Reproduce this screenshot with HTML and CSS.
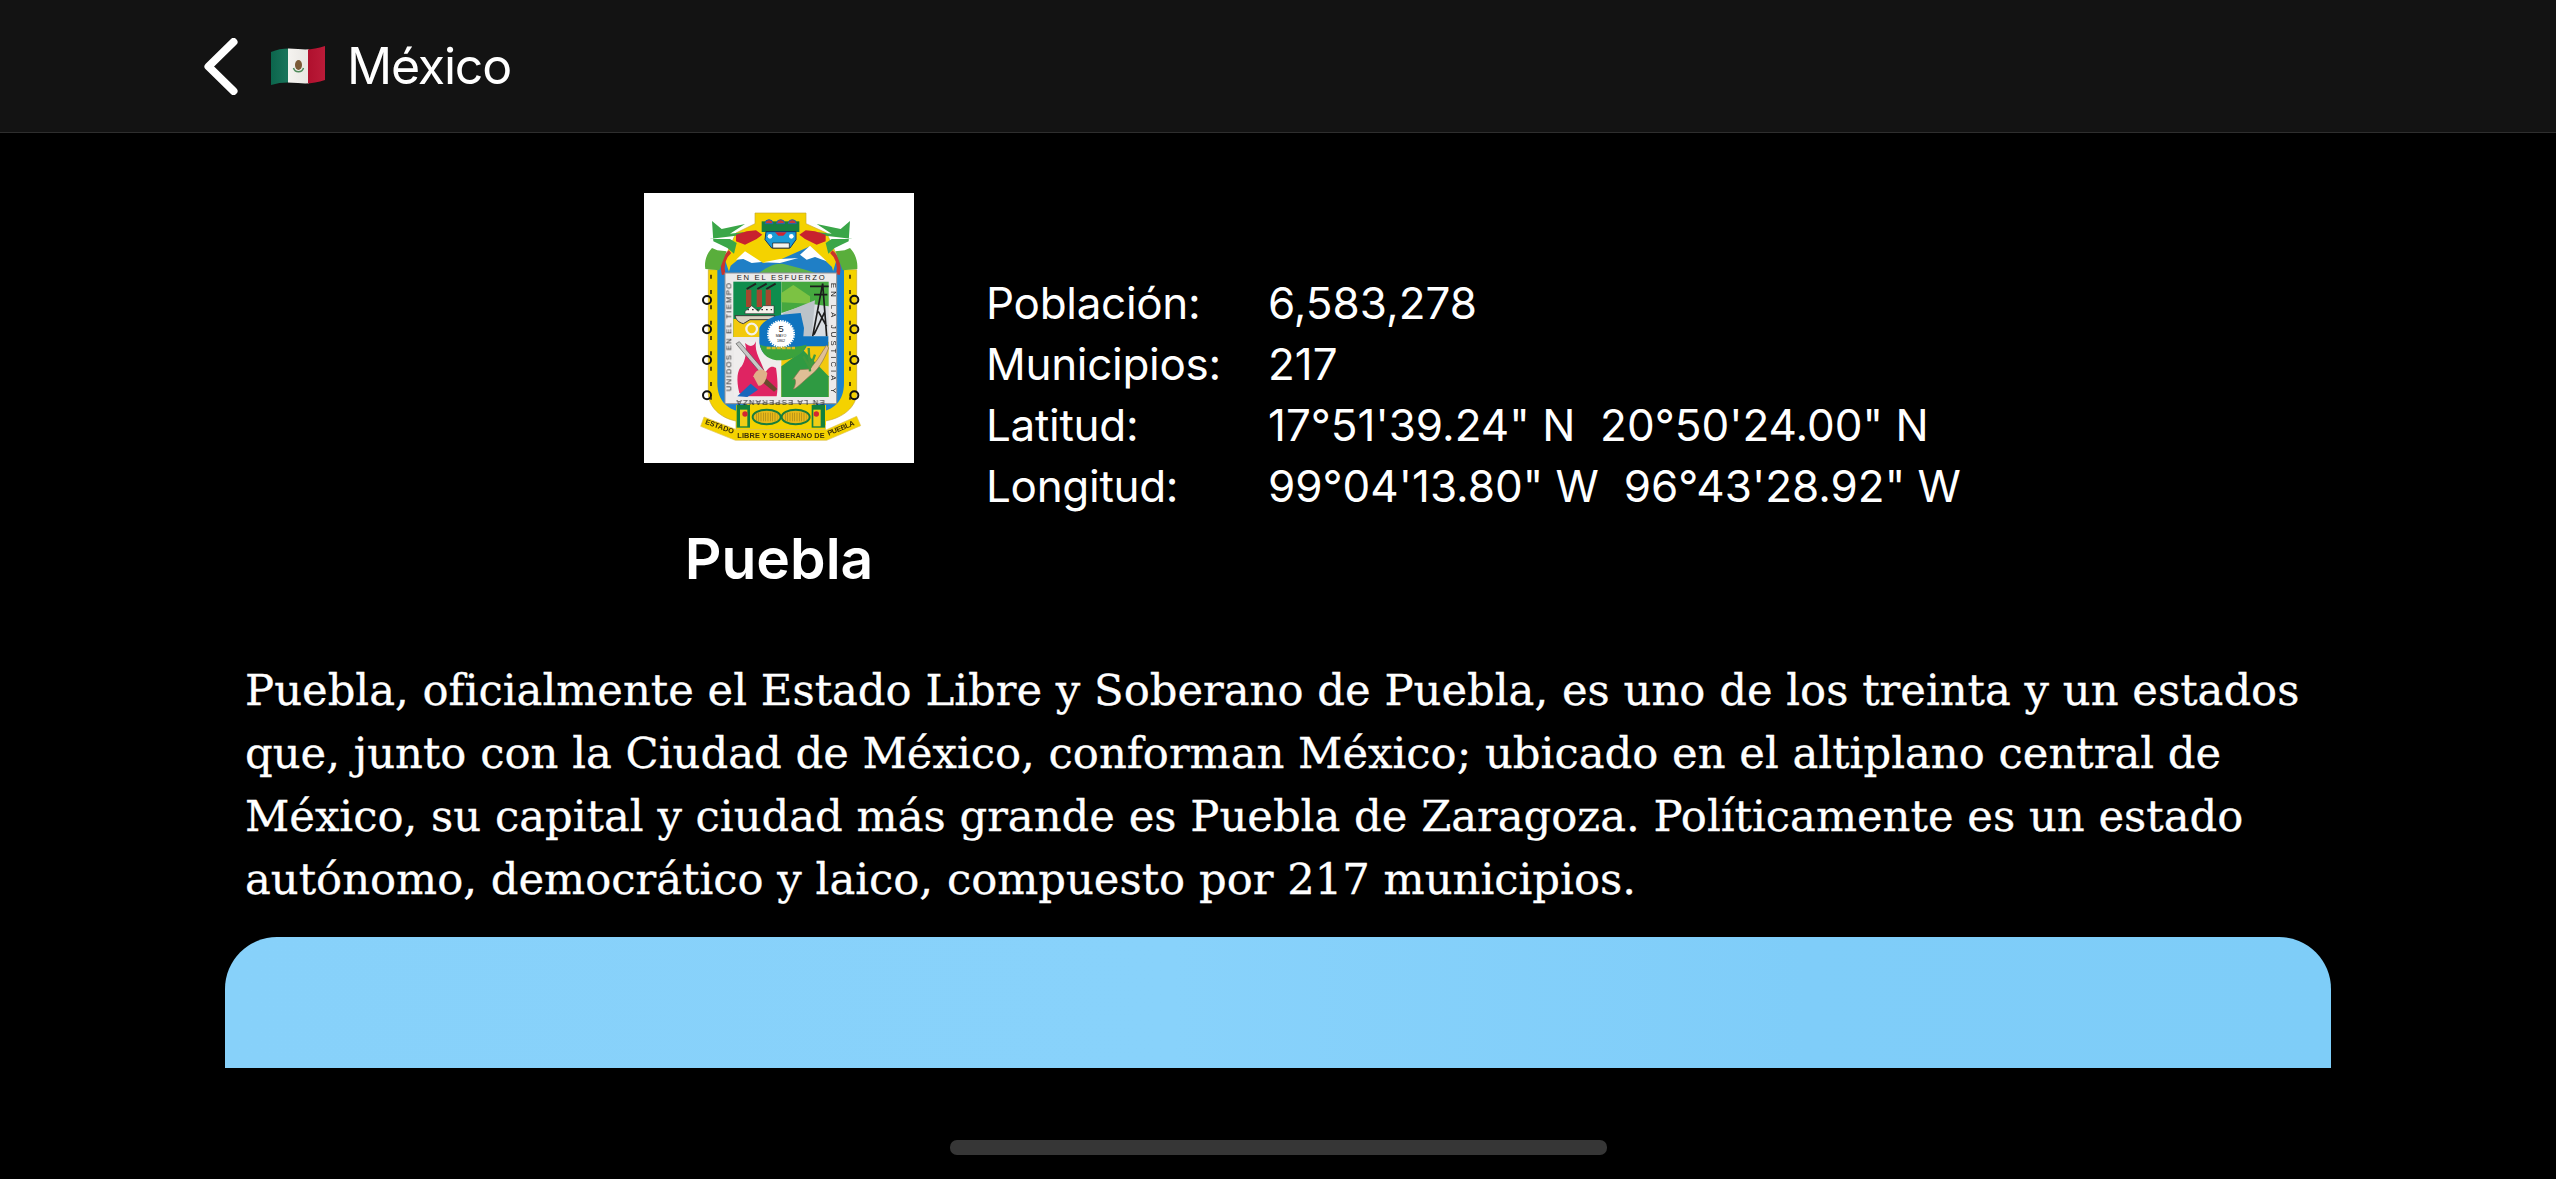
FILE: index.html
```html
<!DOCTYPE html>
<html lang="es">
<head>
<meta charset="utf-8">
<title>Puebla</title>
<link rel="stylesheet" href="styles.css">
</head>
<body>
<header class="nav">
  <svg class="back" viewBox="0 0 34 57" aria-hidden="true"><path d="M29.5 4 L4.5 28.5 L29.5 53" /></svg>
  <svg class="flag" viewBox="0 0 56 42" aria-hidden="true">
    <defs>
      <clipPath id="wave"><path d="M1 7 C10 3 18 3 28 4 C38 5 46 4 55 1 L55 35 C46 38 38 39 28 38 C18 37 10 37 1 40 Z"/></clipPath>
      <linearGradient id="shade" x1="0" x2="1" y1="0" y2="0">
        <stop offset="0" stop-color="#000" stop-opacity=".06"/><stop offset=".3" stop-color="#fff" stop-opacity=".06"/><stop offset=".65" stop-color="#000" stop-opacity=".05"/><stop offset="1" stop-color="#fff" stop-opacity=".05"/>
      </linearGradient>
    </defs>
    <g clip-path="url(#wave)">
      <rect width="18" height="42" x="0" fill="#0b6b50"/>
      <rect width="21" height="42" x="18" fill="#f6f4f0"/>
      <rect width="18" height="42" x="38" fill="#b8102f"/>
      <rect width="56" height="42" fill="url(#shade)"/>
    </g>
    <ellipse cx="28.5" cy="20" rx="3.5" ry="5" fill="#7b5a36"/>
    <path d="M23.5 23 C25 28 32 28 33.5 23" fill="none" stroke="#4f8a5a" stroke-width="1.5"/>
  </svg>
  <span class="nav-title">México</span>
</header>

<main class="page">
  <section class="hero">
    <div class="identity">
      <div class="emblem-box">
        <svg class="emblem" viewBox="42 40 810 810" role="img" aria-label="Escudo de Puebla">
          <rect x="42" y="40" width="810" height="810" fill="#fff"/>
          <!-- gold shield -->
          <path d="M375 100 H528 V132 L590 160 L640 270 L680 270 V640 C680 680 640 715 586 724 L586 750 H318 V724 C270 715 235 680 235 640 V270 L268 270 L318 160 L375 132 Z" fill="#f4d200" stroke="#c9a92e" stroke-width="2"/>
          <!-- blue band -->
          <path d="M262 270 C262 250 268 235 280 225 L300 285 V640 C320 665 340 672 360 678 L345 697 C295 695 262 665 262 610 Z" fill="#1b82cf"/>
          <path d="M642 270 C642 250 636 235 624 225 L606 285 V640 C586 665 566 672 545 678 L560 697 C610 695 642 665 642 610 Z" fill="#1b82cf"/>
          <path d="M281 285 C274 255 282 232 300 216 M624 285 C630 255 622 232 604 216" fill="none" stroke="#c8332d" stroke-width="11"/>
          <!-- mountains -->
          <path d="M295 282 L302 258 L345 222 L400 250 L450 240 L540 200 L606 262 L612 285 Z" fill="#1f7fc6"/>
          <path d="M318 240 L345 215 L395 247 L365 250 L340 238 Z M510 225 L540 198 L590 245 L555 232 L530 240 Z M400 248 L450 238 L505 235 L450 250 Z" fill="#fff"/>
          <path d="M380 285 C410 262 440 245 470 255 C510 265 545 275 570 285 Z" fill="#5db24a"/>
          <!-- frame -->
          <rect x="285" y="280" width="335" height="392" fill="#eceaea" stroke="#8f9094" stroke-width="3"/>
          <!-- quadrants -->
          <rect x="310" y="306" width="144" height="166" fill="#0f8d4d"/>
          <rect x="310" y="418" width="144" height="54" fill="#f2c90d"/>
          <rect x="454" y="306" width="142" height="166" fill="#d8dde2"/>
          <path d="M454 306 H596 V380 L540 372 L454 400 Z" fill="#45a83f"/>
          <path d="M454 340 L490 316 L540 350 L540 372 L454 368 Z" fill="#7cc243"/>
          <path d="M460 400 L555 362 L545 470 L454 472 Z" fill="#bcc3c9"/>
          <rect x="312" y="486" width="142" height="166" fill="#efeded"/>
          <path d="M454 486 H596 V652 H454 Z" fill="#f2c90d"/>
          <path d="M454 560 L520 512 L596 590 L596 652 L454 652 Z" fill="#2f9a42"/>
          <!-- factory -->
          <g fill="#a4472e">
            <rect x="348" y="330" width="16" height="52"/><rect x="380" y="330" width="16" height="52"/><rect x="407" y="330" width="16" height="52"/>
          </g>
          <path d="M350 328 L378 312 M382 328 L410 312 M409 328 L437 312" stroke="#222" stroke-width="6" fill="none"/>
          <path d="M345 395 L365 378 L385 395 L400 378 L432 378 V402 H345 Z" fill="#f5f2ec" stroke="#333" stroke-width="2"/>
          <path d="M352 390 H426" stroke="#333" stroke-width="4" stroke-dasharray="5 9"/>
          <path d="M315 408 H435 L425 420 H360 L340 432 C325 428 318 420 315 408 Z" fill="#d8d2c2" stroke="#3a3a3a" stroke-width="3"/>
          <circle cx="365" cy="448" r="16" fill="none" stroke="#f4f2ea" stroke-width="7"/>
          <!-- pylon -->
          <path d="M578 312 L548 470 M578 312 L590 470 M540 320 H596 M552 345 H592 M565 395 L590 440 M585 395 L552 465" stroke="#1c1c1c" stroke-width="5" fill="none"/>
          <!-- central shield -->
          <path d="M388 445 C400 420 430 410 455 405 L512 400 L522 445 L520 470 H595 V500 H530 C515 530 480 540 450 540 C420 540 392 525 388 490 Z" fill="#0f74bf"/>
          <path d="M390 495 C420 506 490 506 530 495 C520 528 480 542 450 542 C420 542 396 528 390 495 Z" fill="#3ba23c"/>
          <circle cx="453" cy="463" r="38" fill="#fff" stroke="#fff" stroke-dasharray="4 3" stroke-width="8"/>
          <text class="emblem-5" x="453" y="458" text-anchor="middle">5</text>
          <text class="emblem-may" x="453" y="473" text-anchor="middle">MAYO</text>
          <text class="emblem-may" x="453" y="487" text-anchor="middle">1862</text>
          <path d="M410 505 H495" stroke="#d8b928" stroke-width="8" stroke-dasharray="12 3"/>
          <!-- flames and rifle -->
          <path d="M328 640 C318 600 322 570 335 560 C345 545 352 515 345 490 C362 505 372 500 378 485 C372 520 395 545 405 580 C420 555 430 560 438 565 C442 590 445 625 440 650 H345 Z" fill="#df2462"/>
          <path d="M318 492 L392 580 L400 570 L328 486 Z" fill="#c6c8c6" stroke="#555" stroke-width="2"/>
          <path d="M385 575 L442 628 L432 636 L375 590 Z" fill="#6b4a2d"/>
          <path d="M370 590 C380 565 400 565 412 580 C410 600 400 620 385 618 Z" fill="#e0b088"/>
          <path d="M322 650 L362 612 L384 630 L352 652 Z" fill="#1a66bb"/>
          <!-- hand -->
          <path d="M596 505 C580 545 565 570 540 588 C515 610 495 630 490 628 C500 612 498 590 488 600 L510 570 L540 568 L562 540 L590 496 Z" fill="#dfbf96" stroke="#8a7350" stroke-width="2"/>
          <path d="M536 505 L540 575 M520 530 L540 565 M555 525 L540 565" stroke="#3d9a3f" stroke-width="7" fill="none"/>
          <!-- inscriptions -->
          <text class="emblem-motto" x="452" y="300" text-anchor="middle" textLength="264">EN EL ESFUERZO</text>
          <text class="emblem-motto" x="452" y="300" transform="rotate(180 452 480.5)" text-anchor="middle" textLength="264">EN LA ESPERANZA</text>
          <text class="emblem-motto" transform="translate(304 635) rotate(-90)" textLength="325">UNIDOS EN EL TIEMPO</text>
          <text class="emblem-motto" transform="translate(602 310) rotate(90)" textLength="330">EN LA JUSTICIA Y</text>
          <!-- dragons -->
          <path d="M246 124 L275 148 L345 133 L300 162 L345 157 L318 168 L238 178 L300 178 L320 190 L312 222 L292 205 L250 185 Z" fill="#3aa648"/>
          <path d="M660 124 L632 148 L560 133 L605 162 L560 157 L587 168 L668 178 L605 178 L587 190 L595 222 L614 205 L656 185 Z" fill="#3aa648"/>
          <path d="M246 205 L262 212 L290 215 L268 272 L226 268 C222 245 230 222 246 205 Z" fill="#59ae3b"/>
          <path d="M660 205 L644 212 L616 215 L638 272 L682 268 C684 245 676 222 660 205 Z" fill="#59ae3b"/>
          <path d="M318 165 L350 155 L378 152 L397 165 L380 178 L345 195 L318 185 Z M587 165 L555 155 L527 152 L508 165 L525 178 L560 195 L587 185 Z" fill="#c8222e"/>
          <!-- top mask -->
          <rect x="395" y="125" width="113" height="32" fill="#17803f"/>
          <path d="M405 132 a12 12 0 0 1 24 0 Z M440 132 a12 12 0 0 1 24 0 Z M475 132 a12 12 0 0 1 24 0 Z" fill="#c93a36" stroke="#1d67b4" stroke-width="3"/>
          <path d="M408 156 H498 V180 L480 205 H425 L405 180 Z" fill="#1b9bd7" stroke="#12366b" stroke-width="3"/>
          <path d="M428 190 H478 V205 H428 Z" fill="#f3f3ee" stroke="#111" stroke-width="2"/>
          <path d="M435 158 H470 L460 168 H445 Z" fill="#cf2531"/>
          <circle cx="420" cy="170" r="7" fill="#fff"/><circle cx="484" cy="170" r="7" fill="#fff"/>
          <!-- rings -->
          <g fill="none" stroke="#111" stroke-width="6">
            <circle cx="231" cy="361" r="12"/><circle cx="231" cy="449" r="12"/><circle cx="231" cy="541" r="12"/><circle cx="231" cy="647" r="12"/>
            <circle cx="673" cy="360" r="12"/><circle cx="673" cy="449" r="12"/><circle cx="673" cy="541" r="12"/><circle cx="673" cy="647" r="12"/>
          </g>
          <g fill="none" stroke="#3a2c10" stroke-width="5" stroke-dasharray="12 34">
            <path d="M243 285 V660"/><path d="M660 285 V660"/>
          </g>
          <!-- corn -->
          <rect x="318" y="676" width="270" height="60" fill="#f4d200"/>
          <rect x="320" y="676" width="40" height="68" fill="#12813d"/>
          <rect x="545" y="676" width="40" height="68" fill="#12813d"/>
          <rect x="330" y="690" width="22" height="50" fill="#f0cd15"/>
          <rect x="550" y="690" width="22" height="50" fill="#f0cd15"/>
          <circle cx="345" cy="703" r="8" fill="#d52632"/><circle cx="559" cy="703" r="8" fill="#d52632"/>
          <ellipse cx="410" cy="712" rx="42" ry="22" fill="#e9b918" stroke="#177d3d" stroke-width="6"/>
          <ellipse cx="497" cy="712" rx="42" ry="22" fill="#e9b918" stroke="#177d3d" stroke-width="6"/>
          <path d="M378 712 H442 M465 712 H529" stroke="#a5861a" stroke-width="26" stroke-dasharray="2 5" fill="none"/>
          <!-- ribbon -->
          <path d="M222 712 L320 750 H590 L680 710 L692 738 L590 782 H316 L212 740 Z" fill="#f4d200" stroke="#e1c65a" stroke-width="2"/>
          <text class="emblem-ribbon" transform="translate(224 732) rotate(20)" textLength="90">ESTADO</text>
          <text class="emblem-ribbon" x="322" y="776" textLength="262">LIBRE Y SOBERANO DE</text>
          <text class="emblem-ribbon" transform="translate(596 768) rotate(-22)" textLength="85">PUEBLA</text>
        </svg>
      </div>
      <h1 class="state-name">Puebla</h1>
    </div>
    <dl class="facts">
      <dt>Población:</dt><dd>6,583,278</dd>
      <dt>Municipios:</dt><dd>217</dd>
      <dt>Latitud:</dt><dd>17°51'39.24" N&nbsp;&nbsp;20°50'24.00" N</dd>
      <dt>Longitud:</dt><dd>99°04'13.80" W&nbsp;&nbsp;96°43'28.92" W</dd>
    </dl>
  </section>

  <p class="summary">Puebla, oficialmente el Estado Libre y Soberano de Puebla, es uno de los treinta y un estados que, junto con la Ciudad de México, conforman México; ubicado en el altiplano central de México, su capital y ciudad más grande es Puebla de Zaragoza. Políticamente es un estado autónomo, democrático y laico, compuesto por 217 municipios.</p>

  <div class="photo"></div>
  <div class="home-bar"></div>
</main>
</body>
</html>
```
FILE: styles.css
```css
* { box-sizing: border-box; }
html, body { margin: 0; height: 100%; }
body {
  background: #000;
  color: #fff;
  font-family: Inter, "Liberation Sans", sans-serif;
  overflow: hidden;
}
.nav {
  height: 133px;
  background: #131313;
  border-bottom: 1px solid #2e2e2e;
  display: flex;
  align-items: center;
  padding: 0 0 0 204px;
}
.back {
  width: 34px;
  height: 57px;
  fill: none;
  stroke: #fff;
  stroke-width: 8;
  stroke-linecap: round;
  stroke-linejoin: round;
}
.flag { width: 56px; height: 42px; margin-left: 32px; }
.nav-title {
  margin-left: 21px;
  font-size: 50px;
  line-height: 60px;
  font-weight: 400;
  letter-spacing: -1.2px;
}
.page {
  display: flex;
  flex-direction: column;
  padding-top: 60px;
}
.hero {
  display: flex;
  align-items: flex-start;
  margin-left: 644px;
}
.identity {
  width: 270px;
  display: flex;
  flex-direction: column;
  align-items: center;
}
.emblem-box { width: 270px; height: 270px; overflow: hidden; }
.emblem { display: block; width: 270px; height: 270px; filter: blur(0.4px); }
.emblem text { font-family: "Liberation Sans", sans-serif; fill: #1a1a1a; }
.emblem .emblem-motto { font-size: 23px; }
.emblem .emblem-ribbon { font-size: 22px; font-weight: 700; fill: #3a2f08; }
.emblem .emblem-5 { font-size: 28px; }
.emblem .emblem-may { font-size: 11px; }
.state-name {
  margin: 61px 0 0;
  font-size: 57px;
  line-height: 70px;
  font-weight: 600;
  white-space: nowrap;
}
.facts {
  margin: 79px 0 0 72px;
  display: grid;
  grid-template-columns: 282px auto;
  grid-auto-rows: 61px;
  align-items: center;
  font-size: 44px;
  white-space: nowrap;
}
.facts dt, .facts dd { margin: 0; }
.facts dt { letter-spacing: -0.3px; }
.summary {
  margin: 65px 0 0 245px;
  width: 2090px;
  font-family: "DejaVu Serif", serif;
  font-size: 43.3px;
  line-height: 63px;
  -webkit-text-stroke: 0.3px #fff;
}
.photo {
  margin: 26px 0 0 225px;
  width: 2106px;
  height: 131px;
  border-radius: 52px 52px 0 0;
  background: linear-gradient(90deg, #87d1fa 0%, #88d2fb 45%, #7fcdf9 75%, #7ecdf8 100%);
}
.home-bar {
  margin: 72px 0 0 950px;
  width: 657px;
  height: 15px;
  border-radius: 7px;
  background: #363636;
}
```
